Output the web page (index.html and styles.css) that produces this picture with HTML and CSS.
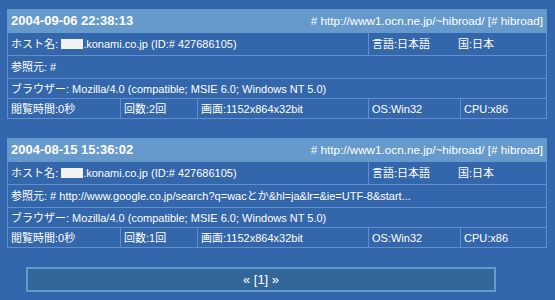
FILE: index.html
```html
<!DOCTYPE html>
<html lang="ja">
<head>
<meta charset="utf-8">
<link rel="stylesheet" href="styles.css">
</head>
<body>
<div class="page">
  <table class="log">
    <colgroup><col class="c1"><col class="c2"><col class="c3"><col class="c4"><col class="c5"></colgroup>
    <tr class="head">
      <td colspan="5"><div class="headrow"><span class="date">2004-09-06 22:38:13</span><span class="url"># http://www1.ocn.ne.jp/~hibroad/ [# hibroad]</span></div></td>
    </tr>
    <tr class="tall">
      <td colspan="3">ホスト名: <span class="mask"></span>.konami.co.jp (ID:# 427686105)</td>
      <td colspan="2"><span class="lang">言語:日本語</span>国:日本</td>
    </tr>
    <tr class="tall"><td colspan="5">参照元: #</td></tr>
    <tr><td colspan="5">ブラウザー: Mozilla/4.0 (compatible; MSIE 6.0; Windows NT 5.0)</td></tr>
    <tr>
      <td>閲覧時間:0秒</td>
      <td>回数:2回</td>
      <td>画面:1152x864x32bit</td>
      <td>OS:Win32</td>
      <td>CPU:x86</td>
    </tr>
  </table>

  <table class="log">
    <colgroup><col class="c1"><col class="c2"><col class="c3"><col class="c4"><col class="c5"></colgroup>
    <tr class="head">
      <td colspan="5"><div class="headrow"><span class="date">2004-08-15 15:36:02</span><span class="url"># http://www1.ocn.ne.jp/~hibroad/ [# hibroad]</span></div></td>
    </tr>
    <tr class="tall">
      <td colspan="3">ホスト名: <span class="mask"></span>.konami.co.jp (ID:# 427686105)</td>
      <td colspan="2"><span class="lang">言語:日本語</span>国:日本</td>
    </tr>
    <tr class="tall"><td colspan="5">参照元: # http://www.google.co.jp/search?q=wacとか&amp;hl=ja&amp;lr=&amp;ie=UTF-8&amp;start...</td></tr>
    <tr><td colspan="5">ブラウザー: Mozilla/4.0 (compatible; MSIE 6.0; Windows NT 5.0)</td></tr>
    <tr>
      <td>閲覧時間:0秒</td>
      <td>回数:1回</td>
      <td>画面:1152x864x32bit</td>
      <td>OS:Win32</td>
      <td>CPU:x86</td>
    </tr>
  </table>

  <div class="pager">« [1] »</div>
</div>
</body>
</html>
```
FILE: styles.css
```css
html, body {
  margin: 0;
  padding: 0;
  background: #3366aa;
}
body {
  font-family: "Liberation Sans", "Noto Sans CJK JP", sans-serif;
  font-size: 11px;
  color: #ffffff;
}
.page {
  padding: 9px 8px 0 7px;
}
.log {
  width: 539px;
  border-collapse: collapse;
  table-layout: fixed;
  margin-bottom: 19px;
}
.c1 { width: 113px; }
.c2 { width: 77px; }
.c3 { width: 171px; }
.c4 { width: 92px; }
.c5 { width: 86px; }
.log td {
  border: 1px solid #5f8fcc;
  padding: 0 3px;
  height: 19px;
  line-height: 14px;
  white-space: nowrap;
  overflow: hidden;
  vertical-align: middle;
}
.log tr.tall td {
  height: 22px;
}
.log tr.head td {
  background: #6699cc;
  height: 22px;
  border-color: #6699cc;
}
.log tr.head + tr td {
  border-top-color: #5f8fcc;
}
.headrow {
  display: flex;
  justify-content: space-between;
  align-items: center;
}
.date {
  font-weight: bold;
  font-size: 13px;
}
.url {
  font-size: 11.7px;
}
.mask {
  display: inline-block;
  width: 22px;
  height: 10px;
  background: #f2f2f2;
  vertical-align: -1px;
}
.lang {
  display: inline-block;
  width: 86px;
}
.pager {
  width: 466px;
  margin-left: 19px;
  height: 21px;
  line-height: 21px;
  border: 2px solid #6699cc;
  background: #336699;
  text-align: center;
  font-size: 13px;
}
```
